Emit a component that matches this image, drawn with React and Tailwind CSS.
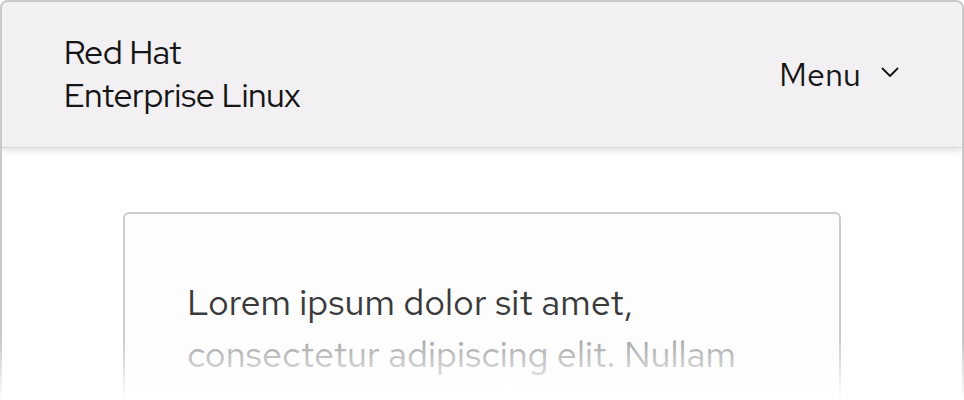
export default function App() {
  return (
    <div className="relative w-[964px] h-[400px] overflow-hidden bg-white" style={{ fontFamily: '"Red Hat Text", "Open Sans", sans-serif' }}>
      {/* device frame */}
      <div className="h-[420px] border-2 border-b-0 border-[#c9c9c9] rounded-t-[8px] overflow-hidden bg-white">
        {/* masthead */}
        <header className="h-[146px] bg-[#f2f0f2] flex items-center justify-between pl-[62px] pr-[63px] shadow-[0_3px_8px_rgba(0,0,0,0.12)] border-b border-[#d8d6d8] relative">
          <div className="text-[33px] leading-[43px] text-[#151515] pb-[1px]" style={{ fontFamily: '"Red Hat Display", "Red Hat Text", sans-serif' }}>
            Red Hat
            <br />
            Enterprise Linux
          </div>
          <button className="flex items-center gap-[20px] text-[32px] text-[#151515] tracking-[0.3px]">
            <span>Menu</span>
            <svg width="18" height="11" viewBox="0 0 18 11" fill="none" className="mt-[-4px]">
              <path d="M1.5 1.5 L9 9 L16.5 1.5" stroke="#151515" strokeWidth="1.8" strokeLinecap="round" strokeLinejoin="round" />
            </svg>
          </button>
        </header>

        {/* content */}
        <main className="pt-[64px] px-[121px]">
          <div className="border-2 border-[#cccccc] rounded-[6px] bg-[#fdfdfd] pt-[62px] pl-[62px] pr-[40px] pb-[60px]">
            <p className="text-[36px] leading-[52px] text-[#3a3a3c]">
              Lorem ipsum dolor sit amet,
              <br />
              <span className="text-[#a9a9ab]">consectetur adipiscing elit. Nullam</span>
            </p>
          </div>
        </main>
      </div>

      {/* bottom fade */}
      <div className="pointer-events-none absolute left-0 right-0 bottom-0 h-[60px] bg-gradient-to-b from-white/0 to-white" />
    </div>
  );
}
